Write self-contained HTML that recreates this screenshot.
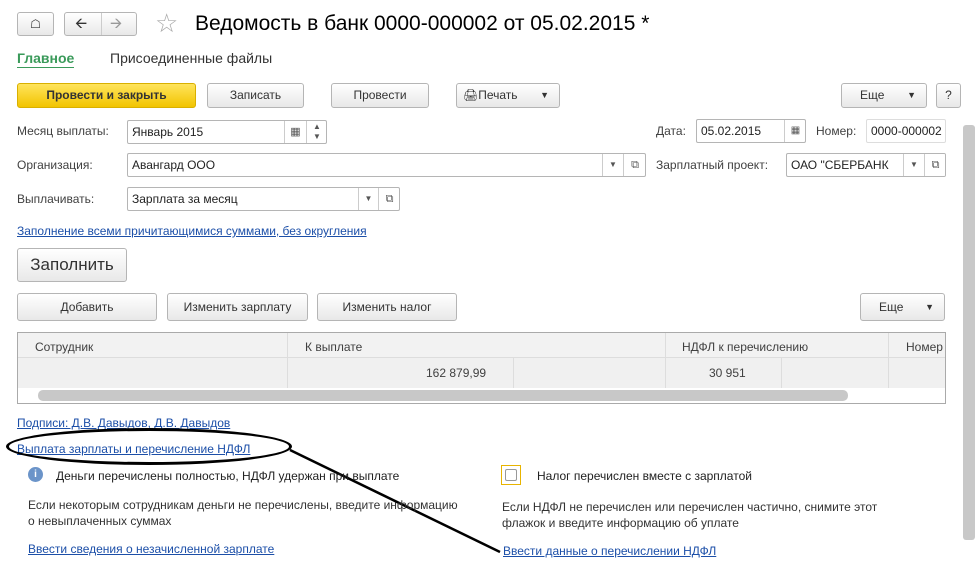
<!DOCTYPE html>
<html><head><meta charset="utf-8"><style>
*{box-sizing:border-box;margin:0;padding:0}
body{width:978px;height:574px;background:#fff;font-family:"Liberation Sans",sans-serif;font-size:12px;color:#404040;position:relative;overflow:hidden}
.a{position:absolute;white-space:nowrap}
.btn{position:absolute;border:1px solid #b5b5b5;border-radius:3px;background:linear-gradient(#fff,#e8e8e8);text-align:center;color:#333;font-size:12px;height:25px;line-height:23px}
.inp{position:absolute;border:1px solid #b5b5b5;border-radius:2px;background:#fff;height:24px;line-height:22px;padding-left:4px;color:#222}
.sep{position:absolute;top:0;bottom:0;border-left:1px solid #ccc;text-align:center;font-size:8px;color:#555}
.lnk{position:absolute;color:#1c4fa8;text-decoration:underline;white-space:nowrap}
.narrow{font-stretch:condensed}
</style></head><body>
<div class="btn" style="left:17px;top:12px;width:37px;height:24px">&#9750;</div>
<div class="btn" style="left:64px;top:12px;width:73px;height:24px;text-align:left;padding-left:10px;font-size:15px;line-height:21px">&#129128;<span style="position:absolute;left:36px;top:0;bottom:0;border-left:1px solid #ccc;padding-left:8px;color:#999">&#129130;</span></div>
<div class="a" style="left:155px;top:8px;font-size:26px;color:#aaa">&#9734;</div>
<div class="a" style="left:195px;top:12px;font-size:21px;color:#000">Ведомость в банк 0000-000002 от 05.02.2015 *</div>
<div class="a" style="left:17px;top:50px;font-size:14px;font-weight:bold;color:#3a9a5a;border-bottom:1px solid #3a9a5a;line-height:17px">Главное</div>
<div class="a" style="left:110px;top:50px;font-size:14px;color:#333">Присоединенные файлы</div>
<div class="btn" style="left:17px;top:83px;width:179px;background:linear-gradient(#ffe45c,#f2c400);border-color:#d9b000;font-weight:bold;color:#333">Провести и закрыть</div>
<div class="btn" style="left:207px;top:83px;width:97px">Записать</div>
<div class="btn" style="left:331px;top:83px;width:98px">Провести</div>
<div class="btn" style="left:456px;top:83px;width:104px;text-align:left;padding-left:6px">&#128424;Печать <span style="position:absolute;right:10px;font-size:9px">&#9660;</span></div>
<div class="btn" style="left:841px;top:83px;width:86px;text-align:left;padding-left:18px">Еще <span style="position:absolute;right:10px;font-size:9px">&#9660;</span></div>
<div class="btn" style="left:936px;top:83px;width:25px">?</div>
<div class="a" style="left:17px;top:124px">Месяц выплаты:</div>
<div class="inp" style="left:127px;top:120px;width:200px">Январь 2015<div class="sep" style="left:156px;width:22px;font-size:11px">&#9638;</div><div class="sep" style="left:178px;width:21px;line-height:10px;padding-top:1px">&#9650;<br>&#9660;</div></div>
<div class="a" style="left:17px;top:158px">Организация:</div>
<div class="inp" style="left:127px;top:153px;width:519px">Авангард ООО<div class="sep" style="left:474px;width:21px">&#9660;</div><div class="sep" style="left:495px;width:23px;font-size:11px">&#10697;</div></div>
<div class="a" style="left:17px;top:192px">Выплачивать:</div>
<div class="inp" style="left:127px;top:187px;width:273px">Зарплата за месяц<div class="sep" style="left:230px;width:20px">&#9660;</div><div class="sep" style="left:250px;width:22px;font-size:11px">&#10697;</div></div>
<div class="a" style="left:656px;top:124px">Дата:</div>
<div class="inp" style="left:696px;top:119px;width:110px">05.02.2015<div class="sep" style="left:87px;width:22px;font-size:10px">&#9638;</div></div>
<div class="a" style="left:816px;top:124px">Номер:</div>
<div class="inp" style="left:866px;top:119px;width:80px;border-color:#ddd;overflow:hidden">0000-000002</div>
<div class="a" style="left:656px;top:158px">Зарплатный проект:</div>
<div class="inp" style="left:786px;top:153px;width:160px;overflow:hidden">ОАО "СБЕРБАНК<div class="sep" style="left:116px;width:21px;background:#fff">&#9660;</div><div class="sep" style="left:137px;width:22px;font-size:11px;background:#fff">&#10697;</div></div>
<div class="lnk" style="left:17px;top:224px">Заполнение всеми причитающимися суммами, без округления</div>
<div class="btn" style="left:17px;top:248px;width:110px;height:34px;line-height:32px;font-size:17px">Заполнить</div>
<div class="btn" style="left:17px;top:293px;width:140px;height:28px;line-height:26px">Добавить</div>
<div class="btn" style="left:167px;top:293px;width:141px;height:28px;line-height:26px">Изменить зарплату</div>
<div class="btn" style="left:317px;top:293px;width:140px;height:28px;line-height:26px">Изменить налог</div>
<div class="btn" style="left:860px;top:293px;width:85px;height:28px;line-height:26px;text-align:left;padding-left:18px">Еще <span style="position:absolute;right:10px;font-size:9px">&#9660;</span></div>
<div class="a" style="left:17px;top:332px;width:929px;height:72px;border:1px solid #aaa;background:#fff;overflow:hidden">
 <div class="a" style="left:0;top:0;width:929px;height:25px;background:#f2f2f2;border-bottom:1px solid #ddd"></div>
 <div class="a" style="left:0;top:25px;width:929px;height:30px;background:#f0f0f0"></div>
 <div class="a" style="left:17px;top:7px">Сотрудник</div>
 <div class="a" style="left:287px;top:7px">К выплате</div>
 <div class="a" style="left:664px;top:7px">НДФЛ к перечислению</div>
 <div class="a" style="left:888px;top:7px">Номер</div>
 <div class="a" style="left:269px;top:0;height:55px;border-left:1px solid #ddd"></div>
 <div class="a" style="left:495px;top:25px;height:30px;border-left:1px solid #ddd"></div>
 <div class="a" style="left:647px;top:0;height:55px;border-left:1px solid #ddd"></div>
 <div class="a" style="left:763px;top:25px;height:30px;border-left:1px solid #ddd"></div>
 <div class="a" style="left:870px;top:0;height:55px;border-left:1px solid #ddd"></div>
 <div class="a" style="left:408px;top:33px">162 879,99</div>
 <div class="a" style="left:691px;top:33px">30 951</div>
 <div class="a" style="left:20px;top:57px;width:810px;height:11px;background:#c8c8c8;border-radius:5px"></div>
</div>
<div class="a" style="left:963px;top:125px;width:12px;height:415px;background:#c8c8c8;border-radius:3px"></div>
<div class="lnk" style="left:17px;top:416px">Подписи: Д.В. Давыдов, Д.В. Давыдов</div>
<div class="lnk" style="left:17px;top:442px">Выплата зарплаты и перечисление НДФЛ</div>
<div class="a" style="left:6px;top:428px;width:286px;height:37px;border:3px solid #000;border-radius:50%"></div>
<svg class="a" style="left:0;top:0" width="978" height="574"><line x1="290" y1="450" x2="500" y2="552" stroke="#000" stroke-width="2.5"/></svg>
<div class="a" style="left:28px;top:467px;width:15px;height:15px;border-radius:50%;background:#6b94c9;color:#fff;font-size:10px;font-weight:bold;text-align:center;line-height:15px">i</div>
<div class="a" style="left:56px;top:469px;color:#222">Деньги перечислены  полностью, НДФЛ удержан при выплате</div>
<div class="a" style="left:28px;top:498px;color:#333">Если некоторым сотрудникам деньги не перечислены, введите информацию</div>
<div class="a" style="left:28px;top:514px;color:#333">о невыплаченных суммах</div>
<div class="lnk" style="left:28px;top:542px">Ввести сведения о незачисленной зарплате</div>
<div class="a" style="left:501px;top:465px;width:20px;height:20px;border:1px solid #e8b400;background:#fff"><div style="margin:3px;height:12px;border:1px solid #999;border-radius:2px"></div></div>
<div class="a" style="left:537px;top:469px;color:#222">Налог перечислен вместе с зарплатой</div>
<div class="a" style="left:502px;top:500px;color:#333">Если НДФЛ не перечислен или перечислен частично, снимите этот</div>
<div class="a" style="left:502px;top:516px;color:#333">флажок и введите информацию об уплате</div>
<div class="lnk" style="left:503px;top:544px">Ввести данные о перечислении НДФЛ</div>
</body></html>
